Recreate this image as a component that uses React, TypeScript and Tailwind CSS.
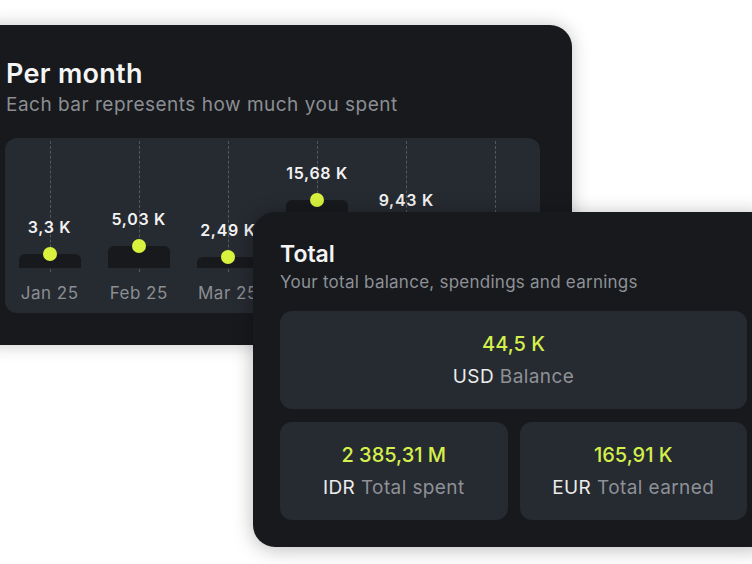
import React from "react";

type Month = { label: string; value: string; amount: number };

const months: Month[] = [
  { label: "Jan 25", value: "3,3 K", amount: 3.3 },
  { label: "Feb 25", value: "5,03 K", amount: 5.03 },
  { label: "Mar 25", value: "2,49 K", amount: 2.49 },
  { label: "Apr 25", value: "15,68 K", amount: 15.68 },
  { label: "May 25", value: "9,43 K", amount: 9.43 },
  { label: "Jun 25", value: "4,12 K", amount: 4.12 },
];

const PX_PER_K = 4.35;

const MonthColumn: React.FC<{ data: Month }> = ({ data }) => {
  return (
    <div className="flex flex-col items-center">
      <div className="relative flex h-[131px] w-full flex-col items-center justify-end pb-[4px]">
        <span className="absolute inset-y-0 left-1/2 border-l border-dashed border-[#54585e]"></span>
        <div className="relative h-[18px] text-[16px] font-semibold leading-[18px] tracking-[0.7px] text-[#f2f2f2]">
          {data.value}
        </div>
        <div
          className="relative mt-[18px] w-[62px] rounded-t-[6px] bg-[#17191d]"
          style={{ height: Math.round(data.amount * PX_PER_K) }}
        >
          <span className="absolute left-1/2 top-0 h-[14px] w-[14px] -translate-x-1/2 -translate-y-1/2 rounded-full bg-[#d8f23e]"></span>
        </div>
      </div>
      <div className="mt-[10px] text-[17px] leading-[22px] tracking-[0.5px] text-[#8b8e93]">{data.label}</div>
    </div>
  );
};

const StatBox: React.FC<{ amount: string; currency: string; caption: string }> = ({
  amount,
  currency,
  caption,
}) => {
  return (
    <div className="flex h-[98px] flex-col items-center justify-center gap-[9px] rounded-[12px] bg-[#262a31]">
      <div className="text-[20px] font-medium leading-[24px] text-[#d5ef4c]">{amount}</div>
      <div className="text-[19px] leading-[24px] tracking-[0.4px]">
        <span className="text-[#ececec]">{currency}</span>{" "}
        <span className="text-[#8e9196]">{caption}</span>
      </div>
    </div>
  );
};

export default function App() {
  return (
    <div className="h-[564px] w-[752px] overflow-hidden bg-white font-['Inter','Noto_Sans',sans-serif]">
      <div className="pt-[25px]">
        <div className="ml-[-27px] h-[320px] w-[599px] rounded-[22px] bg-[#17191d] px-[32px] pt-[33px] shadow-[0_0_18px_rgba(0,0,0,0.22)]">
          <h2 className="pl-[1px] text-[27px] font-semibold leading-[32px] tracking-[0.3px] text-[#f4f4f4]">
            Per month
          </h2>
          <p className="mt-[3px] pl-[1px] text-[19px] leading-[24px] tracking-[0.5px] text-[#8b8e93]">
            Each bar represents how much you spent
          </p>
          <div className="mt-[21px] grid h-[175px] grid-cols-6 rounded-[12px] bg-[#262a31] pb-[9px] pt-[3px]">
            {months.map((m) => (
              <MonthColumn key={m.label} data={m} />
            ))}
          </div>
        </div>

        <div className="relative ml-[253px] mt-[-133px] w-[521px] rounded-[22px] bg-[#17191d] px-[27px] pb-[27px] pt-[28px] shadow-[0_2px_20px_rgba(0,0,0,0.28)]">
          <h2 className="text-[23px] font-semibold leading-[28px] text-[#f4f4f4]">Total</h2>
          <p className="mt-[3px] text-[17px] leading-[22px] tracking-[0.25px] text-[#8e9196]">
            Your total balance, spendings and earnings
          </p>
          <div className="mt-[18px] flex flex-col gap-[13px]">
            <StatBox amount="44,5 K" currency="USD" caption="Balance" />
            <div className="grid grid-cols-2 gap-[12px]">
              <StatBox amount="2 385,31 M" currency="IDR" caption="Total spent" />
              <StatBox amount="165,91 K" currency="EUR" caption="Total earned" />
            </div>
          </div>
        </div>
      </div>
    </div>
  );
}
